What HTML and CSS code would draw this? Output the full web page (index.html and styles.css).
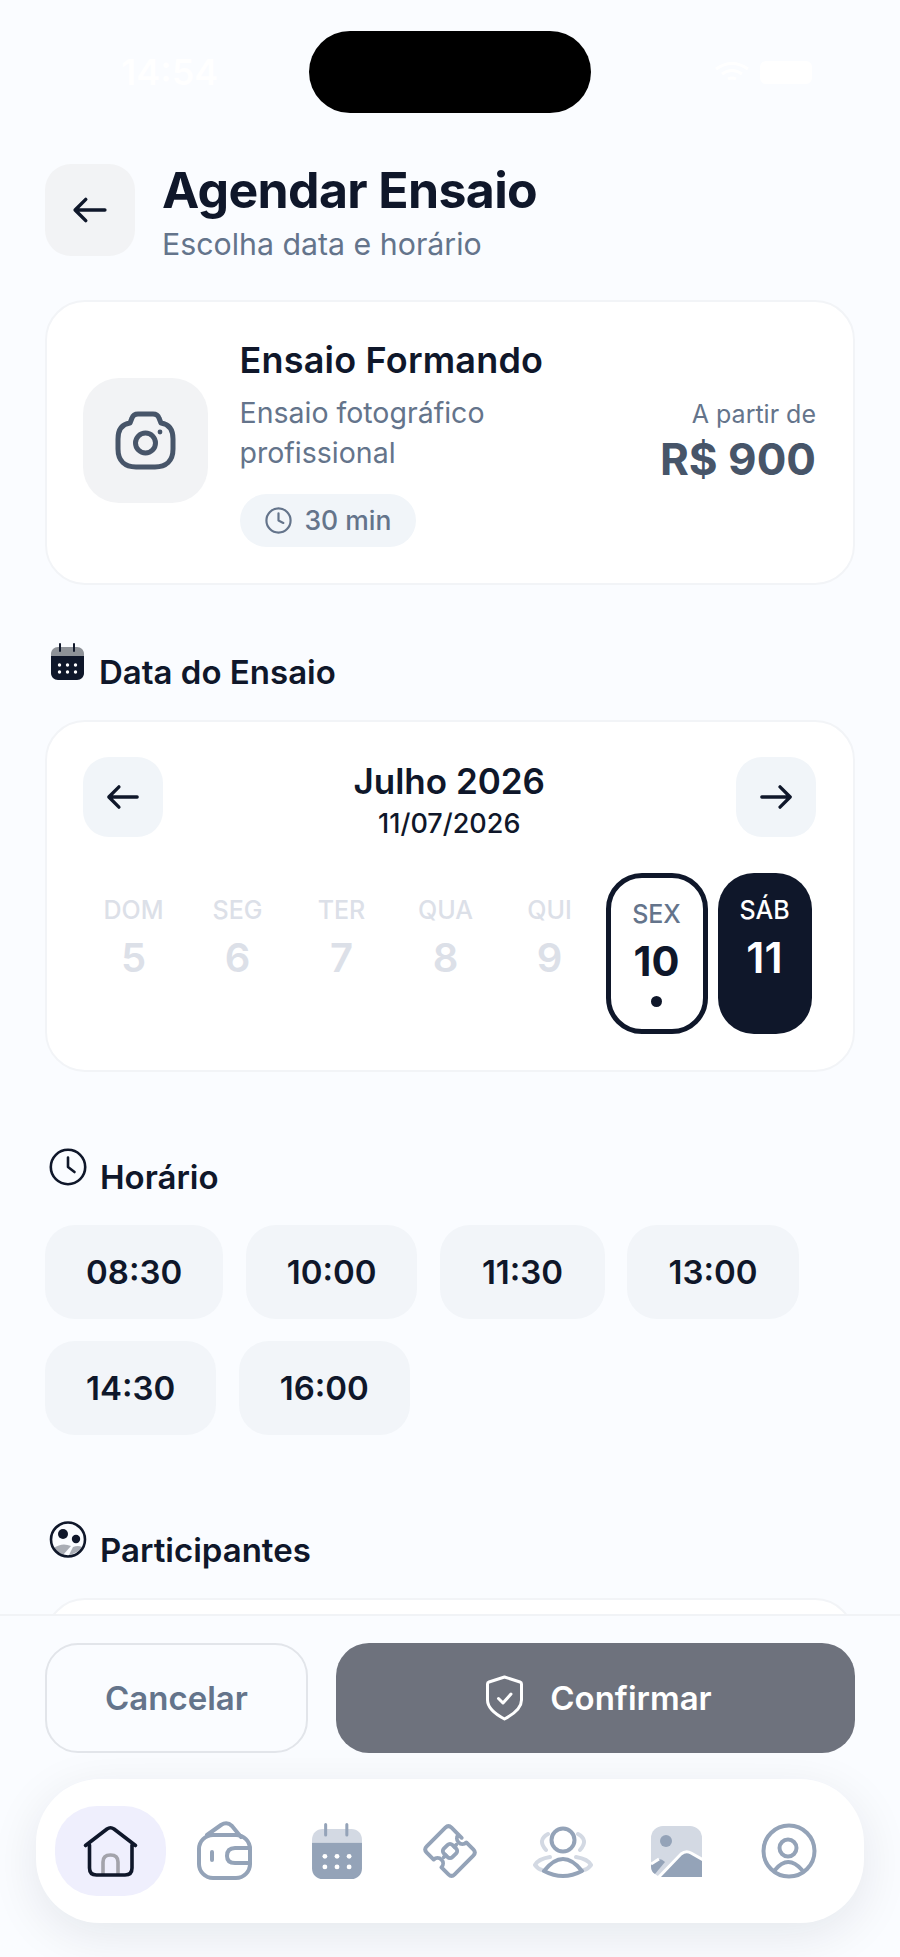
FILE: index.html
```html
<!DOCTYPE html>
<html lang="pt-BR">
    <head>
        <meta charset="utf-8">
        <title>Agendar Ensaio</title>
        <link rel="stylesheet" href="styles.css">
    </head>
    <body>
        <div class="phone">
            <div class="main">
                <!-- status bar, white on white in the capture -->
                <div class="status">
                    <span class="clock-text">14:54</span>
                    <div class="island"></div>
                    <div class="status-right">
                        <svg class="wifi" width="36" height="24" viewBox="0 0 36 24"><path d="M2 9q16-11 32 0M8 14q10-7 20 0M14 19q4-2 8 0"/></svg>
                        <div class="battery"></div>
                    </div>
                </div>

                <div class="header">
                    <button class="back-btn">
                        <svg width="42" height="42" viewBox="0 0 24 24" class="arrow"><path d="M9.57 5.93 3.5 12l6.07 6.07M20.5 12H3.67"/></svg>
                    </button>
                    <div class="header-text">
                        <h1>Agendar Ensaio</h1>
                        <p>Escolha data e horário</p>
                    </div>
                </div>

                <div class="card service">
                    <div class="service-icon">
                        <svg width="61" height="59" viewBox="0 0 61 59" class="camera">
                            <path d="M3 28C3 17 8 13 15 12L17 7C18 4 20 3 23 3H38C41 3 43 4 44 7L46 12C53 13 58 17 58 28V38C58 50 51 56 40 56H21C10 56 3 50 3 38Z"/>
                            <circle cx="30.5" cy="32" r="10"/>
                            <circle class="camera-dot" cx="45" cy="21" r="2.4"/>
                        </svg>
                    </div>
                    <div class="service-info">
                        <h2>Ensaio Formando</h2>
                        <p>Ensaio fotográfico profissional</p>
                        <div class="chip">
                            <svg width="29" height="29" viewBox="0 0 24 24"><circle cx="12" cy="12" r="10"/><path d="M12 6v6l4 2"/></svg>
                            <span>30 min</span>
                        </div>
                    </div>
                    <div class="price">
                        <span>A partir de</span>
                        <strong>R$ 900</strong>
                    </div>
                </div>

                <div class="section-title first">
                    <svg width="33" height="37" viewBox="0 0 33 37">
                        <path class="cal-top dark" d="M0 13V11C0 7 3 4 7 4H26C30 4 33 7 33 11V13Z"/>
                        <path class="cal-body dark" d="M0 13H33V30C33 34 30 37 26 37H7C3 37 0 34 0 30Z"/>
                        <path class="cal-peg dark" d="M9 1V8M23 1V8"/>
                        <g fill="#fff"><circle cx="8.5" cy="22" r="1.7"/><circle cx="16.5" cy="22" r="1.7"/><circle cx="24.5" cy="22" r="1.7"/><circle cx="8.5" cy="29" r="1.7"/><circle cx="16.5" cy="29" r="1.7"/><circle cx="24.5" cy="29" r="1.7"/></g>
                    </svg>
                    <h3>Data do Ensaio</h3>
                </div>

                <div class="card calendar">
                    <div class="month-row">
                        <button class="month-btn">
                            <svg width="40" height="40" viewBox="0 0 24 24" class="arrow"><path d="M9.57 5.93 3.5 12l6.07 6.07M20.5 12H3.67"/></svg>
                        </button>
                        <div class="month-label">
                            <h4>Julho 2026</h4>
                            <p>11/07/2026</p>
                        </div>
                        <button class="month-btn">
                            <svg width="40" height="40" viewBox="0 0 24 24" class="arrow"><path d="M14.43 5.93 20.5 12l-6.07 6.07M3.5 12h16.83"/></svg>
                        </button>
                    </div>
                    <div class="days">
                        <div class="day off"><span>DOM</span><b>5</b></div>
                        <div class="day off"><span>SEG</span><b>6</b></div>
                        <div class="day off"><span>TER</span><b>7</b></div>
                        <div class="day off"><span>QUA</span><b>8</b></div>
                        <div class="day off"><span>QUI</span><b>9</b></div>
                        <div class="day today"><span>SEX</span><b>10</b><i></i></div>
                        <div class="day selected"><span>SÁB</span><b>11</b></div>
                    </div>
                </div>

                <div class="section-title">
                    <svg width="38" height="38" viewBox="0 0 38 38" class="clock-big"><circle cx="19" cy="19" r="17.2"/><path d="M19 9.5V19L25.5 24"/></svg>
                    <h3>Horário</h3>
                </div>
                <div class="times">
                    <button class="time">08:30</button>
                    <button class="time">10:00</button>
                    <button class="time">11:30</button>
                    <button class="time">13:00</button>
                    <button class="time">14:30</button>
                    <button class="time">16:00</button>
                </div>

                <div class="section-title people">
                    <svg width="38" height="37" viewBox="0 0 38 37">
                        <path fill="#a9adb5" d="M5 27Q13 21 22 25L14 34Q8 32 5 27Z"/>
                        <path fill="#a9adb5" d="M24 26Q29 24 33 26Q29 32 20 34Z"/>
                        <circle cx="19" cy="18.5" r="17" fill="none" stroke="#0f172a" stroke-width="2.6"/>
                        <circle cx="14" cy="13" r="5" fill="#0f172a"/>
                        <circle cx="27" cy="18" r="4.2" fill="#0f172a"/>
                    </svg>
                    <h3>Participantes</h3>
                </div>
                <div class="card participants"></div>
            </div>

            <div class="bottom">
                <div class="actions">
                    <button class="cancel">Cancelar</button>
                    <button class="confirm">
                        <svg width="39" height="46" viewBox="0 0 39 46"><path d="M19.500 2 35 7Q36.500 7.500 36.500 9V25C36.500 33 28 39.500 19.500 44 11 39.500 2.500 33 2.500 25V9Q2.500 7.500 4 7Z"/><path d="M13.500 23.500l4.500 4.500 8-9"/></svg>
                        <span>Confirmar</span>
                    </button>
                </div>

                <div class="nav">
                    <div class="nav-item active">
                        <svg width="58" height="54" viewBox="0 0 58 54" class="home">
                            <path class="door" d="M21 50V38Q21 31 28.500 31 36 31 36 38V50"/>
                            <path d="M3.500 21.500 25 5Q28.500 2.500 32 5L53.500 21.500M7.500 21V44Q7.500 51 14.500 51H43Q50 51 50 44V21"/>
                        </svg>
                    </div>
                    <div class="nav-item">
                        <svg width="60" height="62" viewBox="0 0 60 62" class="line">
                            <rect x="5" y="15" width="51" height="43" rx="14"/>
                            <path d="M13 15 27 5Q33 1 38 6L47 17M18 32V40M56 28H41Q33 28 33 36 33 43 41 43H56"/>
                        </svg>
                    </div>
                    <div class="nav-item">
                        <svg width="50" height="56" viewBox="0 0 33 37">
                            <path class="cal-top" d="M0 13V11C0 7 3 4 7 4H26C30 4 33 7 33 11V13Z"/>
                            <path class="cal-body" d="M0 13H33V30C33 34 30 37 26 37H7C3 37 0 34 0 30Z"/>
                            <path class="cal-peg" d="M9 1V8M23 1V8"/>
                            <g fill="#fff"><circle cx="8.500" cy="22" r="1.600"/><circle cx="16.500" cy="22" r="1.600"/><circle cx="24.500" cy="22" r="1.600"/><circle cx="8.500" cy="29" r="1.600"/><circle cx="16.500" cy="29" r="1.600"/><circle cx="24.500" cy="29" r="1.600"/></g>
                        </svg>
                    </div>
                    <div class="nav-item">
                        <svg width="56" height="56" viewBox="-25.500 -25.500 51 51" class="line ticket">
                            <g transform="rotate(45)">
                                <path d="M-1-16H-14Q-18-16-18-12V12Q-18 16-14 16H-5A5 5 0 0 1 5 16H14Q18 16 18 12V-12Q18-16 14-16H5A5 5 0 0 1-5-16"/>
                                <rect x="-5.500" y="-5.500" width="11" height="11" rx="3"/>
                                <path d="M0-5.500V-8M0 5.500V8"/>
                            </g>
                        </svg>
                    </div>
                    <div class="nav-item">
                        <svg width="60" height="56" viewBox="0 0 60 56" class="line">
                            <path class="faint" d="M15 11Q4 17 13 27M45 11Q56 17 47 27M17 34Q5 36 2 42 5 46 9 47M43 34Q55 36 58 42 55 46 51 47"/>
                            <circle cx="30" cy="17" r="11.500"/>
                            <path d="M11 48Q30 24 49 48 30 58 11 48Z"/>
                        </svg>
                    </div>
                    <div class="nav-item">
                        <svg width="51" height="51" viewBox="0 0 51 51">
                            <rect width="51" height="51" rx="12" fill="#d3d9e3"/>
                            <circle cx="15" cy="15" r="6" fill="#94a3b8"/>
                            <path fill="#94a3b8" d="M0 38Q0 36 2 35L8 33Q11 33 14 36L4 48Q0 46 0 40Z"/>
                            <path fill="#94a3b8" stroke="#fff" stroke-width="3" d="M6 53 30 28Q35 24 40 27L54 35V53Z"/>
                            <path fill="none" stroke="#fff" stroke-width="3" d="M0 38 8 33"/>
                        </svg>
                    </div>
                    <div class="nav-item">
                        <svg width="56" height="56" viewBox="0 0 56 56" class="line">
                            <circle cx="28" cy="28" r="25.500"/>
                            <circle cx="27" cy="25" r="8.500"/>
                            <path d="M14 47Q27 31 41 47"/>
                        </svg>
                    </div>
                </div>
            </div>
        </div>
    </body>
</html>
```

FILE: styles.css
```css
/* page */
body{
    margin: 0;
    font-family: Inter, "Noto Sans", sans-serif;
    background-color: #fafcff;
    color: #0f172a;
}
button{
    font-family: inherit;
    border: none;
    color: inherit;
}
h1, h2, h3, h4, p{
    margin: 0;
}
.phone{
    width: 900px;
    height: 1957px;
    display: flex;
    flex-direction: column;
    overflow: hidden;
}
.main{
    flex: 1;
    min-height: 0;
    overflow: hidden;
    padding: 0 45px;
}
.arrow{
    fill: none;
    stroke: #0f172a;
    stroke-width: 2;
    stroke-linecap: round;
    stroke-linejoin: round;
}

/* status bar */
.status{
    height: 82px;
    padding-top: 31px;
    margin: 0 10px 51px;
    display: flex;
    align-items: center;
    justify-content: space-between;
    color: #fff;
}
.clock-text{
    font-size: 36px;
    font-weight: 600;
    width: 210px;
    padding-left: 66px;
    box-sizing: border-box;
}
.island{
    width: 282px;
    height: 82px;
    background-color: #000;
    border-radius: 41px;
}
.status-right{
    width: 210px;
    display: flex;
    align-items: center;
    justify-content: flex-end;
    gap: 10px;
    padding-right: 33px;
    box-sizing: border-box;
}
.wifi{
    fill: none;
    stroke: #fff;
    stroke-width: 3;
}
.battery{
    width: 52px;
    height: 23px;
    background-color: #fff;
    border-radius: 6px;
}

/* header */
.header{
    display: flex;
    gap: 27px;
    margin-bottom: 37px;
}
.back-btn{
    width: 90px;
    height: 92px;
    padding: 0;
    border-radius: 26px;
    background-color: #f2f3f5;
    display: flex;
    align-items: center;
    justify-content: center;
}
.header-text{
    margin-top: -2px;
}
.header-text h1{
    font-size: 50px;
    line-height: 56px;
    font-weight: 700;
    letter-spacing: -0.65px;
}
.header-text p{
    margin-top: 7px;
    font-size: 30.3px;
    line-height: 38px;
    color: #64748b;
}

/* cards */
.card{
    background-color: #fff;
    border: 2.5px solid #f2f4f7;
    border-radius: 40px;
}
.service{
    display: flex;
    align-items: center;
    padding: 32.5px 37px 36px 36px;
}
.service-icon{
    width: 125px;
    height: 125px;
    flex-shrink: 0;
    margin-right: 31.5px;
    border-radius: 36px;
    background-color: #f2f3f5;
    display: flex;
    align-items: center;
    justify-content: center;
}
.camera{
    fill: none;
    stroke: #475569;
    stroke-width: 5;
    stroke-linejoin: round;
}
.camera-dot{
    fill: #475569;
    stroke: none;
}
.service-info h2{
    font-size: 36px;
    line-height: 50px;
    font-weight: 600;
    letter-spacing: 0.2px;
}
.service-info p{
    max-width: 280px;
    margin: 8px 0 21px;
    font-size: 28.5px;
    line-height: 40px;
    color: #64748b;
}
.chip{
    width: 176px;
    height: 53px;
    box-sizing: border-box;
    padding-left: 24px;
    display: flex;
    align-items: center;
    gap: 12px;
    background-color: #f1f5f9;
    border-radius: 27px;
    color: #64748b;
    font-size: 26.5px;
    font-weight: 500;
}
.chip svg{
    fill: none;
    stroke: #64748b;
    stroke-width: 1.8;
    stroke-linecap: round;
    stroke-linejoin: round;
}
.price{
    margin-left: auto;
    display: flex;
    flex-direction: column;
    align-items: flex-end;
}
.price span{
    font-size: 25px;
    line-height: 36px;
    color: #64748b;
}
.price strong{
    font-size: 44px;
    line-height: 54px;
    font-weight: 700;
    color: #475569;
}

/* section titles */
.section-title{
    display: flex;
    align-items: flex-start;
    gap: 13px;
    margin: 76px 0 28px 4px;
}
.section-title.first{
    margin-top: 58px;
    gap: 15px;
    padding-left: 2px;
}
.section-title.people{
    margin-top: 86px;
}
.section-title h3{
    margin-top: 9px;
    font-size: 33px;
    line-height: 40px;
    font-weight: 600;
}
.clock-big{
    fill: none;
    stroke: #0f172a;
    stroke-width: 2.6;
    stroke-linecap: round;
    stroke-linejoin: round;
}

/* calendar icon, used in the title and in the nav */
.cal-top{
    fill: #d3d9e3;
}
.cal-body{
    fill: #94a3b8;
}
.cal-peg{
    fill: none;
    stroke: #94a3b8;
    stroke-width: 2;
    stroke-linecap: round;
}
.cal-top.dark{
    fill: #8e9298;
}
.cal-body.dark{
    fill: #0f172a;
}
.cal-peg.dark{
    stroke: #0f172a;
}

/* calendar card */
.calendar{
    padding: 35.5px 37px 36px 35.5px;
}
.month-row{
    display: flex;
    justify-content: space-between;
}
.month-btn{
    width: 80px;
    height: 80px;
    padding: 0;
    border-radius: 26px;
    background-color: #f1f5f9;
    display: flex;
    align-items: center;
    justify-content: center;
}
.month-label{
    margin-top: 1.5px;
    text-align: center;
}
.month-label h4{
    font-size: 35px;
    line-height: 44px;
    font-weight: 600;
}
.month-label p{
    margin-top: 4px;
    font-size: 27px;
    line-height: 34px;
    font-weight: 500;
}
.days{
    display: flex;
    gap: 10px;
    margin: 32px 0 0 4px;
}
.day{
    width: 94px;
    height: 161px;
    box-sizing: border-box;
    padding-top: 22px;
    border-radius: 36px;
    display: flex;
    flex-direction: column;
    align-items: center;
}
.day span{
    font-size: 25px;
    line-height: 30px;
    font-weight: 500;
}
.day b{
    margin-top: 6.4px;
    font-size: 40px;
    line-height: 54px;
    font-weight: 600;
}
.day.off{
    color: #dce0e8;
}
.day.today{
    width: 102px;
    margin-left: -1px;
    padding-top: 21px;
    border: 5px solid #0f172a;
}
.day.today span{
    color: #64748b;
}
.day.today b{
    margin-top: 5.9px;
    font-size: 41.5px;
    font-weight: 700;
}
.day.today i{
    width: 11px;
    height: 11px;
    margin-top: 8px;
    border-radius: 50%;
    background-color: #0f172a;
}
.day.selected{
    background-color: #0f172a;
    color: #fff;
}
.day.selected b{
    margin-top: 5.4px;
    font-size: 43px;
}

/* times */
.times{
    display: flex;
    flex-wrap: wrap;
    gap: 22px 22.5px;
}
.time{
    min-width: 165px;
    height: 94px;
    padding: 0 41px;
    box-sizing: border-box;
    border-radius: 30px;
    background-color: #f2f5f9;
    font-size: 33px;
    font-weight: 600;
}
.participants{
    height: 200px;
}

/* bottom actions and nav */
.bottom{
    flex-shrink: 0;
    border-top: 2.5px solid #f1f3f6;
    background-color: #fafcff;
    padding: 27px 0 34px;
}
.actions{
    display: flex;
    gap: 28px;
    padding: 0 45px;
    margin-bottom: 26px;
}
.cancel{
    width: 263px;
    height: 110px;
    border: 2.5px solid #e2e5ea;
    border-radius: 33px;
    background-color: transparent;
    color: #64748b;
    font-size: 33px;
    font-weight: 600;
}
.confirm{
    flex: 1;
    height: 110px;
    padding: 0 0 0 6px;
    border-radius: 33px;
    background-color: #6e727d;
    color: #fff;
    font-size: 33px;
    font-weight: 600;
    display: flex;
    align-items: center;
    justify-content: center;
    gap: 26px;
}
.confirm svg{
    fill: none;
    stroke: #fff;
    stroke-width: 3;
    stroke-linecap: round;
    stroke-linejoin: round;
}
.nav{
    height: 144px;
    box-sizing: border-box;
    margin: 0 36px;
    padding: 0 19px;
    display: flex;
    align-items: center;
    justify-content: space-between;
    background-color: #fff;
    border-radius: 64px;
    box-shadow: 0 12px 50px rgba(15, 23, 42, 0.09);
}
.nav-item{
    width: 111px;
    height: 90px;
    border-radius: 42px;
    display: flex;
    align-items: center;
    justify-content: center;
}
.nav-item.active{
    background-color: #efeffd;
}
.line{
    fill: none;
    stroke: #94a3b8;
    stroke-width: 4;
    stroke-linecap: round;
    stroke-linejoin: round;
}
.line.ticket{
    stroke-width: 3.5;
}
.line .faint{
    stroke: #d3d9e3;
}
.home{
    fill: none;
    stroke: #0f172a;
    stroke-width: 3.6;
    stroke-linecap: round;
    stroke-linejoin: round;
}
.home .door{
    stroke: #a3a3ab;
}
```
